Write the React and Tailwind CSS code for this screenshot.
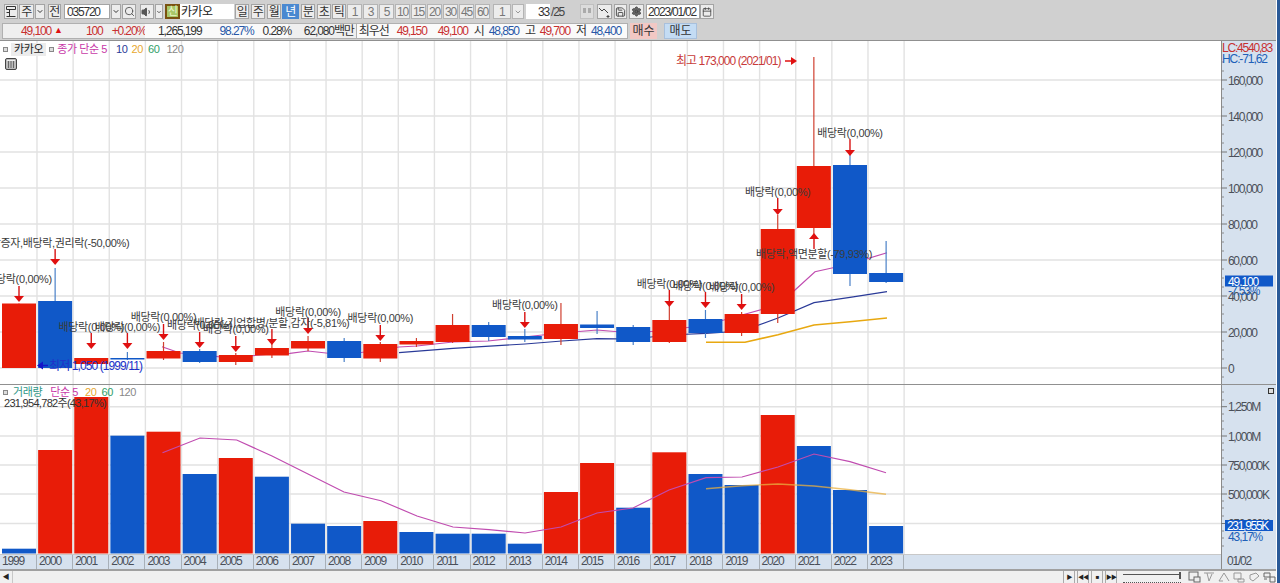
import { Search, Volume1, Save, Settings, Calendar, ChevronDown } from 'lucide-react';

// x centre of a year slot, shared by candles, bars and lines
const cx = (i) => 19 + 36.13 * i;
const years = Array.from({ length: 25 }, (_, i) => 1999 + i);

// [color, bodyTop, bodyBottom, wickTop, wickBottom]
const candles = [
  ['r', 303.5, 368, 303.5, 368],
  ['b', 301, 368, 268, 368],
  ['r', 358, 364, 358, 364],
  ['b', 358, 359.5, 352, 360],
  ['r', 351, 358.5, 342, 360],
  ['b', 351, 362, 349, 363],
  ['r', 355, 362, 353, 365],
  ['r', 348, 355.5, 343, 358],
  ['r', 341, 348.5, 336, 351],
  ['b', 341, 358, 338, 362],
  ['r', 344, 358.5, 342, 362],
  ['r', 341, 344.5, 338, 347],
  ['r', 325, 342, 314, 343],
  ['b', 325, 337, 322, 341],
  ['b', 336, 339.5, 329, 342],
  ['r', 324, 339, 303, 345],
  ['b', 324.5, 328, 311, 334],
  ['b', 327, 342, 325, 345],
  ['r', 320, 342, 304, 343],
  ['b', 319, 333, 310, 338],
  ['r', 314, 333, 312, 336],
  ['r', 229, 314, 215, 323],
  ['r', 166, 228, 57, 238],
  ['b', 165, 274, 155, 286],
  ['b', 273, 282, 241, 283],
];

const volumes = [
  ['b', 548.7], ['r', 450], ['r', 397], ['b', 435.7], ['r', 431.7], ['b', 474], ['r', 458], ['b', 476.7],
  ['b', 523.7], ['b', 526], ['r', 521], ['b', 532], ['b', 533.7], ['b', 533.7], ['b', 543.7], ['r', 492],
  ['r', 463], ['b', 507.7], ['r', 452.3], ['b', 474], ['b', 485], ['r', 415], ['b', 446], ['b', 490], ['b', 526],
];

const div = '배당락(0,00%)';
// [year index, arrow top, arrow tip, label, label centre y]
const markers = [
  [0, 286, 302, div, 279],
  [1, 249, 265, '무상증자,배당락,권리락(-50,00%)', 243],
  [2, 333, 349, div, 327],
  [3, 333, 349, div, 327],
  [4, 324, 340, div, 317],
  [5, 332, 348, div, 325],
  [6, 336, 352, div, 329],
  [7, 329, 345, '배당락,기업합병/분할,감자(-5,81%)', 323],
  [8, 318, 334, div, 312],
  [10, 325, 341, div, 318],
  [14, 312, 328, div, 305],
  [18, 290, 307, div, 284],
  [19, 292, 308, div, 286],
  [20, 294, 310, div, 287],
  [21, 198, 215, div, 192],
  [23, 139, 156, div, 133],
];

const ma5 = [[162, 346.7], [180, 353], [218, 356.7], [236, 357], [272, 354], [290, 353.3], [308, 351], [344, 355], [399, 347], [417, 346], [453, 342], [488, 341], [524, 337], [561, 333], [597, 330], [633, 333], [669, 330], [706, 325], [742, 315], [778, 305], [795, 290], [815, 271.7], [850, 264], [887, 252.7]];
const ma10 = [[399, 352.7], [453, 348.3], [525, 344], [562, 341], [597, 338.7], [633, 339], [669, 335], [706, 333.3], [742, 331], [778, 318], [814, 302.7], [850, 297.3], [887, 291.7]];
const ma20 = [[706, 342.3], [745, 342.3], [778, 334.7], [814, 325], [850, 321.7], [887, 318]];
const volMa5 = [[162.5, 452.7], [200, 438], [236.7, 440], [272, 456], [308, 474], [344, 492], [381, 500.7], [417, 516], [453, 527], [489, 529.7], [525, 533], [561, 527], [597, 513], [633, 508], [669, 490], [706, 477.7], [742, 477], [778, 467], [814, 454], [850, 461.7], [886, 472.7]];
const volMa20 = [[706, 488.7], [742, 485.7], [778, 484], [814, 486], [850, 489.7], [886, 494.3]];

const pts = (list) => list.map((p) => p.join(',')).join(' ');
const fill = { r: '#e81c08', b: '#1058c8' };
const wick = { r: '#d04030', b: '#4a80c8' };

function Grid({ top, bottom, rows }) {
  return (
    <g stroke="#e2e2e2">
      {years.map((_, i) => (
        <line key={i} x1={37 + 36.13 * i} x2={37 + 36.13 * i} y1={top} y2={bottom} strokeWidth="1.4" />
      ))}
      {rows.map((y) => (
        <line key={y} x1="0" x2="1221" y1={y} y2={y} strokeWidth="1.6" />
      ))}
    </g>
  );
}

function PricePane() {
  return (
    <svg width="1221" height="343" viewBox="0 41 1221 343" className="block shrink-0 bg-white">
      <Grid top={41} bottom={384} rows={[80, 116, 152, 188, 224, 260, 296, 332, 368]} />
      <polyline points={pts(ma5)} fill="none" stroke="#c04cb0" strokeWidth="1.2" />
      <polyline points={pts(ma10)} fill="none" stroke="#2a3a98" strokeWidth="1.2" />
      <polyline points={pts(ma20)} fill="none" stroke="#e8a810" strokeWidth="1.6" />
      {candles.map(([c, t, b, wt, wb], i) => (
        <g key={i}>
          <line x1={cx(i)} x2={cx(i)} y1={wt} y2={wb} stroke={wick[c]} strokeWidth="1.2" />
          <rect x={cx(i) - 17} y={t} width="34" height={b - t} fill={fill[c]} />
        </g>
      ))}
      {markers.map(([i, y1, y2], k) => (
        <g key={k}>
          <line x1={cx(i)} x2={cx(i)} y1={y1} y2={y2 - 5} stroke="#d81010" strokeWidth="1.4" />
          <polygon points={`${cx(i) - 5},${y2 - 6} ${cx(i) + 5},${y2 - 6} ${cx(i)},${y2}`} fill="#e01010" />
        </g>
      ))}
      <line x1={814} x2={814} y1={238} y2={249} stroke="#d81010" strokeWidth="1.4" />
      <polygon points="809,239 819,239 814,233" fill="#e01010" />
      <g fontSize="11" fill="#3c3c3c" textAnchor="middle" letterSpacing="-0.35">
        {markers.map(([i, , , label, y], k) => (
          <text key={k} x={cx(i)} y={y + 4}>{label}</text>
        ))}
        <text x={814} y={258}>배당락,액면분할(-79,93%)</text>
      </g>
      <text x="676" y="64.5" fontSize="12" fill="#c83a3a" letterSpacing="-0.95">최고 173,000 (2021/01)</text>
      <line x1="785" x2="792" y1="61" y2="61" stroke="#e01010" strokeWidth="1.5" />
      <polygon points="791,57 797,61 791,65" fill="#e01010" />
      <polygon points="37,365.5 43,361.5 43,369.5" fill="#1414c8" />
      <line x1="42" x2="48" y1="365.5" y2="365.5" stroke="#1414c8" strokeWidth="1.5" />
      <text x="49" y="369.500" fontSize="12" fill="#2030c8" letterSpacing="-0.9">최저 1,050 (1999/11)</text>
    </svg>
  );
}

function VolumePane() {
  return (
    <svg width="1221" height="170" viewBox="0 385 1221 170" className="block shrink-0 bg-white">
      <Grid top={385} bottom={555} rows={[406.7, 436, 465, 494, 523.5]} />
      {volumes.map(([c, t], i) => (
        <rect key={i} x={cx(i) - 17} y={t} width="34" height={553.5 - t} fill={fill[c]} />
      ))}
      <polyline points={pts(volMa5)} fill="none" stroke="#c04cb0" strokeWidth="1.2" />
      <polyline points={pts(volMa20)} fill="none" stroke="#eab040" strokeWidth="1.4" strokeOpacity="0.75" />
      <line x1="0" x2="1221" y1="554.5" y2="554.5" stroke="#c8c8c8" />
    </svg>
  );
}

function Axis({ top, height, labels, minor, children }) {
  return (
    <svg width="55" height={height} viewBox={`1221 ${top} 55 ${height}`} className="block shrink-0 bg-[#d6e1ee]">
      <line x1="1221.5" x2="1221.5" y1={top} y2={top + height} stroke="#8a8a8a" />
      {minor.map((y) => (
        <line key={y} x1="1221" x2="1224" y1={y} y2={y} stroke="#8a8a8a" />
      ))}
      {labels.map(([y, t]) => (
        <g key={t}>
          <line x1="1221" x2="1227" y1={y} y2={y} stroke="#777" />
          <text x="1228" y={y + 4.5} fontSize="12" fill="#4a4f58" letterSpacing="-1.35">{t}</text>
        </g>
      ))}
      {children}
    </svg>
  );
}

function Btn({ className = '', children }) {
  return (
    <div className={`flex h-[15px] shrink-0 items-center justify-center border border-[#a4a4a4] bg-[#ececec] text-[12px] text-[#333] ${className}`}>
      {children}
    </div>
  );
}

function Toolbar() {
  return (
    <div className="flex h-[21px] shrink-0 items-center pl-[4px] pt-[2px] tracking-[-0.5px]">
      <Btn className="w-[14px]">
        <svg width="10" height="11" viewBox="0 0 10 11" fill="none" stroke="#333"><path d="M.5.5h9v3h-9zM3.5 3.500v7M.5 10.500h9M.5 6.500h3" /></svg>
      </Btn>
      <Btn className="ml-[1px] w-[15px]">주</Btn>
      <Btn className="ml-[1px] w-[10px]"><ChevronDown size={9} strokeWidth={3} /></Btn>
      <Btn className="ml-[3px] w-[13px]">전</Btn>
      <div className="ml-[3px] flex h-[15px] w-[46px] shrink-0 items-center border border-[#a4a4a4] bg-white pl-[2px] text-[12px] tracking-[-1.2px] text-[#333]">035720</div>
      <Btn className="ml-[1px] w-[10px]"><ChevronDown size={9} strokeWidth={3} /></Btn>
      <Btn className="ml-[1px] w-[14px]"><Search size={11} color="#555" /></Btn>
      <Btn className="ml-[4px] w-[14px]"><Volume1 size={12} color="#555" fill="#555" /></Btn>
      <Btn className="ml-[1px] w-[8px]"><ChevronDown size={8} strokeWidth={3} /></Btn>
      <div className="ml-[2px] flex h-[15px] w-[15px] shrink-0 items-center justify-center border-2 border-[#7a5210] bg-[#a8c868] text-[11px] text-[#e8f4c8]">신</div>
      <div className="flex h-[15px] w-[54px] shrink-0 items-center bg-white pl-[1px] text-[12px] text-[#222]">카카오</div>
      <Btn className="ml-[1px] w-[14px]">일</Btn>
      <Btn className="ml-[2px] w-[14px]">주</Btn>
      <Btn className="ml-[2px] w-[14px]">월</Btn>
      <Btn className="ml-[1px] w-[17px] !border-[#4a88d0] !bg-[#4a88d0] !text-white">년</Btn>
      <Btn className="ml-[2px] w-[14px]">분</Btn>
      <Btn className="ml-[2px] w-[14px]">초</Btn>
      <Btn className="ml-[1px] w-[14px]">틱</Btn>
      {['1', '3', '5', '10', '15', '20', '30', '45', '60'].map((n) => (
        <Btn key={n} className="ml-[1px] w-[15px] !border-[#b4b4b4] !text-[12px] !tracking-[-1.2px] !text-[#777]">{n}</Btn>
      ))}
      <Btn className="ml-[3px] w-[18px] !border-[#b4b4b4] !text-[12px] !text-[#777]">1</Btn>
      <Btn className="ml-[1px] w-[12px] !border-[#b4b4b4]"><ChevronDown size={8} strokeWidth={3} color="#999" /></Btn>
      <div className="ml-[2px] flex h-[15px] w-[24px] shrink-0 items-center justify-end bg-white pr-[1px] text-[12px] tracking-[-1.2px] text-[#333]">33</div>
      <span className="ml-[1px] w-[29px] shrink-0 text-[12px] tracking-[-1.2px] text-[#444]">/25</span>
      <Btn className="w-[14px] !border-[#c0c0c0] !bg-[#dcdcdc]">
        <svg width="11" height="9" viewBox="0 0 11 9" fill="#aaa"><rect x="1" y="1" width="3" height="5" /><rect x="6" y="1" width="3" height="5" /></svg>
      </Btn>
      <Btn className="ml-[3px] w-[15px]">
        <svg width="13" height="12" viewBox="0 0 13 12" fill="none" stroke="#444"><path d="M1 2l3 3 2-2 4 4M10 9v3M8.500 10.500h3" /></svg>
      </Btn>
      <Btn className="ml-[2px] w-[13px]"><Save size={12} color="#444" /></Btn>
      <Btn className="ml-[2px] w-[15px]"><Settings size={11} color="#444" fill="#666" /></Btn>
      <div className="ml-[2px] flex h-[15px] w-[54px] shrink-0 items-center border border-[#a4a4a4] bg-white pl-[1px] text-[12px] tracking-[-1.2px] text-[#333]">2023/01/02</div>
      <Btn className="w-[14px]"><Calendar size={10} color="#444" /></Btn>
    </div>
  );
}

function QuoteBar() {
  return (
    <div className="flex h-[19px] shrink-0 items-center pl-[2px] text-[12px] tracking-[-1.1px]">
      <div className="flex h-[16px] w-[626px] shrink-0 items-stretch border border-[#b0b0b0] bg-[#efefef]">
        <div className="flex w-[142px] items-center text-[#c83030]">
          <span className="ml-[18px]">49,100</span>
          <span className="ml-[3px] text-[9px] text-[#e01010]">▲</span>
          <span className="ml-[24px]">100</span>
          <span className="ml-[9px]">+0.20%</span>
        </div>
        <div className="flex w-[143px] items-center bg-[#fafafa] text-[#333]">
          <span className="ml-[13px]">1,265,199</span>
          <span className="ml-[18px] text-[#2858a8]">98.27%</span>
          <span className="ml-[9px]">0.28%</span>
        </div>
        <div className="flex w-[68px] items-center justify-end pr-[2px] text-[#333]">62,080백만</div>
        <div className="flex w-[272px] items-center border-l border-[#b0b0b0] bg-[#fafafa] text-[#333]">
          <span className="ml-[2px]">최우선</span>
          <span className="ml-[8px] text-[#c83030]">49,150</span>
          <span className="ml-[11px] text-[#c83030]">49,100</span>
          <span className="ml-[6px]">시</span>
          <span className="ml-[5px] text-[#2858a8]">48,850</span>
          <span className="ml-[6px]">고</span>
          <span className="ml-[5px] text-[#c83030]">49,700</span>
          <span className="ml-[6px]">저</span>
          <span className="ml-[5px] text-[#2858a8]">48,400</span>
        </div>
      </div>
      <div className="ml-[2px] flex h-[16px] w-[27px] shrink-0 items-center justify-center bg-[#f2c8c4] tracking-[0px] text-[#333]">매수</div>
      <div className="ml-[7px] flex h-[16px] w-[33px] shrink-0 items-center justify-center border border-[#a8c0dc] bg-[#c4dcf4] tracking-[0px] text-[#333]">매도</div>
    </div>
  );
}

function Legend({ className, children }) {
  return <div className={`absolute flex items-center text-[11px] leading-[13px] tracking-[-0.4px] ${className}`}>{children}</div>;
}

const dot = <span className="inline-block h-[5px] w-[5px] border border-[#888] bg-[#ddd]" />;

function StatusIcons() {
  return (
    <svg width="88" height="12" viewBox="0 0 88 12" fill="none" stroke="#999" className="shrink-0">
      <rect x="1" y="1" width="9" height="8" stroke="#666" />
      <rect x="6" y="6" width="6" height="5" stroke="#666" fill="#eee" />
      <path d="M16 2h10M19 2l2 8 3-7" />
      <path d="M31 10l5-8 5 8M31 10h4" />
      <path d="M46 2h7v6h-7zM50 8h6v3h-6z" />
      <path d="M62 4l6-2 3 3-6 5-3-2z" />
      <path d="M76 2h6v4h-6zM82 6h5v5h-5zM76 8h3" stroke="#666" />
    </svg>
  );
}

export default function App() {
  return (
    <div className="flex h-[583px] w-[1280px] overflow-hidden border-r-[3px] border-[#2a5a98] font-['Liberation_Sans','Noto_Sans_CJK_KR',sans-serif]">
      <div className="flex w-[1276px] shrink-0 flex-col bg-[#d0d0d0]">
        <Toolbar />
        <QuoteBar />
        <div className="h-[1px] shrink-0 bg-[#909090]" />

        {/* price pane */}
        <div className="relative flex shrink-0">
          <PricePane />
          <Axis
            top={41}
            height={343}
            minor={[62, 71, 89, 98, 107, 125, 134, 143, 161, 170, 179, 197, 206, 215, 233, 242, 251, 269, 278, 287, 305, 314, 323, 341, 350, 359, 377]}
            labels={[[80, '160,000'], [116, '140,000'], [152, '120,000'], [188, '100,000'], [224, '80,000'], [260, '60,000'], [296, '40,000'], [332, '20,000'], [368, '0']]}
          >
            <text x="1222" y="52" fontSize="12" fill="#c83030" letterSpacing="-1.2">LC:4540,83</text>
            <text x="1222" y="62.500" fontSize="12" fill="#2060b8" letterSpacing="-1.1">HC:-71,62</text>
            <rect x="1225" y="275.500" width="48" height="11" fill="#1058c8" />
            <text x="1228" y="285.500" fontSize="12" fill="#fff" letterSpacing="-1.1">49,100</text>
            <text x="1228" y="295" fontSize="12" fill="#2060b8" letterSpacing="-1.1">-7,53%</text>
          </Axis>
          <Legend className="left-[3px] top-[2px] gap-[3px]">
            {dot}
            <span className="bg-[#ececec] px-[3px] text-[#222]">카카오</span>
            {dot}
            <span className="text-[#c838a8]">종가 단순 5</span>
            <span className="ml-[6px] text-[#2a3a98]">10</span>
            <span className="ml-[1px] text-[#e8a830]">20</span>
            <span className="ml-[2px] text-[#30a068]">60</span>
            <span className="ml-[4px] text-[#888]">120</span>
          </Legend>
          <svg width="12" height="12" viewBox="0 0 12 12" className="absolute left-[5px] top-[17px]">
            <rect x=".5" y=".5" width="11" height="11" rx="1.5" fill="#bbb" stroke="#444" />
            <path d="M3.500 3v7M6 3v7M8.500 3v7" stroke="#666" />
            <path d="M2 2.500h8" stroke="#eee" />
          </svg>
        </div>

        <div className="h-[1px] shrink-0 bg-[#909090]" />

        {/* volume pane */}
        <div className="relative flex shrink-0">
          <VolumePane />
          <Axis
            top={385}
            height={170}
            minor={[392, 400, 414, 421, 429, 443, 450, 458, 472, 479, 487, 501, 508, 516, 531, 538, 546]}
            labels={[[406.7, '1,250M'], [436, '1,000M'], [465, '750,000K'], [494, '500,000K'], [523.5, '250,000K']]}
          >
            <rect x="1225" y="520" width="48" height="11" fill="#1058c8" />
            <text x="1227" y="530" fontSize="12" fill="#fff" letterSpacing="-1.3">231,955K</text>
            <text x="1228" y="541" fontSize="12" fill="#2060b8" letterSpacing="-1.1">43,17%</text>
            <rect x="1268.500" y="388.500" width="5" height="5" fill="#ddd" stroke="#333" />
          </Axis>
          <Legend className="left-[3px] top-[1px] gap-[3px]">
            {dot}
            <span className="ml-[2px] text-[#309888]">거래량</span>
            <span className="ml-[5px] text-[#c838a8]">단순 5</span>
            <span className="ml-[4px] text-[#e8a830]">20</span>
            <span className="ml-[2px] text-[#30a068]">60</span>
            <span className="ml-[3px] text-[#888]">120</span>
          </Legend>
          <Legend className="left-[4px] top-[12px] !tracking-[-0.7px] text-[#333]">231,954,782주(43,17%)</Legend>
        </div>

        {/* date axis */}
        <div className="flex h-[16px] shrink-0 border-b-2 border-[#a0a0a0] bg-[#d6e1ee] text-[12px] tracking-[-1.2px] text-[#4a4f58]">
          <div className="flex w-[1221px] shrink-0">
            {years.map((y) => (
              <div key={y} className="w-[36.13px] shrink-0 border-r border-[#a8b0b8] pl-[2px] leading-[13px] first:w-[37px]">{y}</div>
            ))}
          </div>
          <div className="border-l border-[#8a8a8a] pl-[5px] leading-[13px]">01/02</div>
        </div>

        {/* scroll bar */}
        <div className="flex min-h-0 flex-1 items-center bg-[#f0f0f0]">
          <div className="flex h-full w-[13px] shrink-0 items-center justify-center border-r border-[#c8c8c8] text-[7px] text-[#222]">◀</div>
          <div className="ml-auto flex items-center gap-[2px]">
            {['▶', '◀◀', '■', '▶▶'].map((g) => (
              <div key={g} className="flex h-[12px] w-[12px] items-center justify-center border-x border-[#aaa] text-[6px] tracking-[-1px] text-[#222]">{g}</div>
            ))}
            <div className="relative ml-[4px] h-[12px] w-[58px] shrink-0">
              <div className="absolute left-0 right-0 top-[3px] h-[1px] bg-[#555]" />
              <div className="absolute right-0 top-[1px] h-[7px] w-[2px] bg-[#555]" />
              <div className="absolute bottom-0 left-0 right-0 h-[2px] border-b border-dotted border-[#555]" />
            </div>
            <div className="ml-[5px]"><StatusIcons /></div>
          </div>
        </div>
      </div>
    </div>
  );
}
